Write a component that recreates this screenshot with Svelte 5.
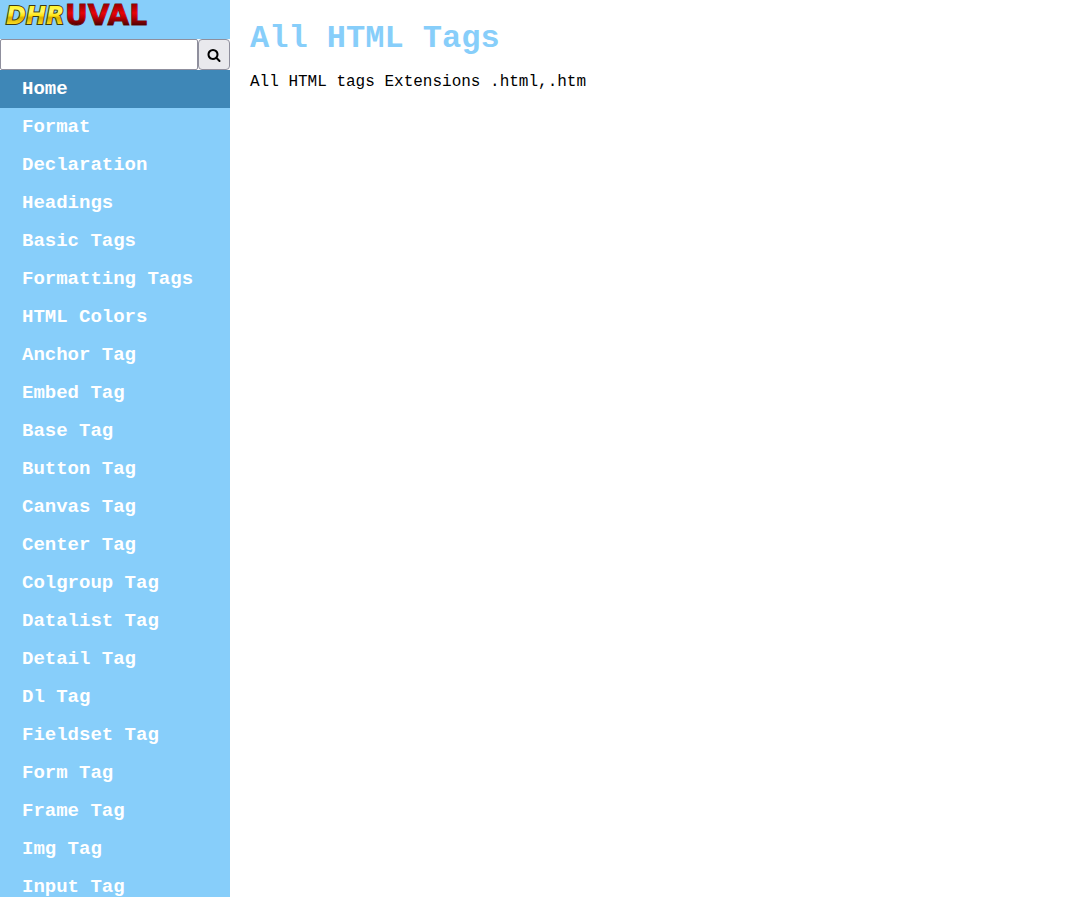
<script>
  const links = [
    'Home', 'Format', 'Declaration', 'Headings', 'Basic Tags', 'Formatting Tags',
    'HTML Colors', 'Anchor Tag', 'Embed Tag', 'Base Tag', 'Button Tag', 'Canvas Tag',
    'Center Tag', 'Colgroup Tag', 'Datalist Tag', 'Detail Tag', 'Dl Tag',
    'Fieldset Tag', 'Form Tag', 'Frame Tag', 'Img Tag', 'Input Tag'
  ];
  let active = $state('Home');
  let query = $state('');
</script>

<div class="page">
  <aside class="sidebar">
    <a class="logo" href="#top">
      <svg width="170" height="32" viewBox="0 0 170 32" role="img" aria-label="DHRUVAL">
        <defs>
          <linearGradient id="gold" gradientUnits="userSpaceOnUse" x1="0" y1="6" x2="0" y2="25">
            <stop offset="0" stop-color="#fff62a" />
            <stop offset="0.3" stop-color="#fff766" />
            <stop offset="0.5" stop-color="#ffe414" />
            <stop offset="0.62" stop-color="#d9ad00" />
            <stop offset="1" stop-color="#ffe326" />
          </linearGradient>
          <linearGradient id="ruby" gradientUnits="userSpaceOnUse" x1="0" y1="5" x2="0" y2="25">
            <stop offset="0" stop-color="#a00000" />
            <stop offset="0.4" stop-color="#e80408" />
            <stop offset="0.6" stop-color="#c40004" />
            <stop offset="1" stop-color="#500000" />
          </linearGradient>
        </defs>
        <text class="gold" x="6" y="24">DHR</text>
        <text class="ruby" x="65" y="25">UVAL</text>
      </svg>
    </a>

    <form class="search" onsubmit={(e) => e.preventDefault()}>
      <input type="text" aria-label="Search tags" bind:value={query} />
      <button type="submit" aria-label="Search">
        <svg width="14" height="14" viewBox="0 0 1792 1792" aria-hidden="true">
          <path d="M1216 832q0-185-131.5-316.5T768 384 451.5 515.5 320 832t131.5 316.5T768 1280t316.5-131.5T1216 832zm512 832q0 52-38 90t-90 38q-54 0-90-38l-343-342q-179 124-399 124-143 0-273.5-55.5t-225-150-150-225T64 832t55.5-273.5 150-225 225-150T768 128t273.5 55.5 225 150 150 225T1472 832q0 220-124 399l343 343q37 37 37 90z" />
        </svg>
      </button>
    </form>

    <nav>
      {#each links as link}
        <a href="#{link.toLowerCase().replaceAll(' ', '-')}" class:active={active === link} onclick={() => (active = link)}>{link}</a>
      {/each}
    </nav>
  </aside>

  <main>
    <h1>All HTML Tags</h1>
    <p>All HTML tags Extensions .html,.htm</p>
  </main>
</div>

<style>
  :global(body) {
    margin: 0;
    background: #fff;
  }
  .page {
    display: grid;
    grid-template-columns: 230px 1fr;
    height: 100vh;
    font-family: "Liberation Mono", monospace;
    font-size: 16px;
    color: #000;
  }
  .sidebar {
    min-height: 0;
    overflow-y: auto;
    scrollbar-width: none;
    background: #87cefa;
  }
  .logo {
    display: block;
    height: 39px;
  }
  .logo svg {
    display: block;
  }
  .logo text {
    font-family: "DejaVu Sans", sans-serif;
    font-weight: 700;
    paint-order: stroke;
  }
  .gold {
    font-size: 24px;
    font-style: italic;
    fill: url(#gold);
    stroke: #3f3a10;
    stroke-width: 2px;
  }
  .ruby {
    font-size: 28px;
    fill: url(#ruby);
    stroke: #6a1420;
    stroke-width: 1px;
  }
  .search {
    display: flex;
    height: 31px;
    background: #fff;
  }
  .search input,
  .search button {
    box-sizing: border-box;
    margin: 0;
    border: 1px solid #8f8f9d;
  }
  .search input {
    flex: 1;
    min-width: 0;
    padding: 0 4px;
    border-radius: 2px;
    background: #fff;
    font: inherit;
  }
  .search button {
    display: flex;
    align-items: center;
    justify-content: center;
    width: 32px;
    padding: 0;
    border-radius: 4px;
    background: #e9e9ed;
  }
  nav a {
    display: block;
    padding: 8px 22px;
    font-size: 19px;
    line-height: 22px;
    font-weight: 700;
    color: #fff;
    text-decoration: none;
  }
  nav a.active {
    background: #3e87b7;
  }
  main {
    padding: 21px 20px;
  }
  h1 {
    margin: 0 0 16px;
    font-size: 32px;
    line-height: 36px;
    color: #87cefa;
  }
  p {
    margin: 0;
    line-height: 18px;
  }
</style>
